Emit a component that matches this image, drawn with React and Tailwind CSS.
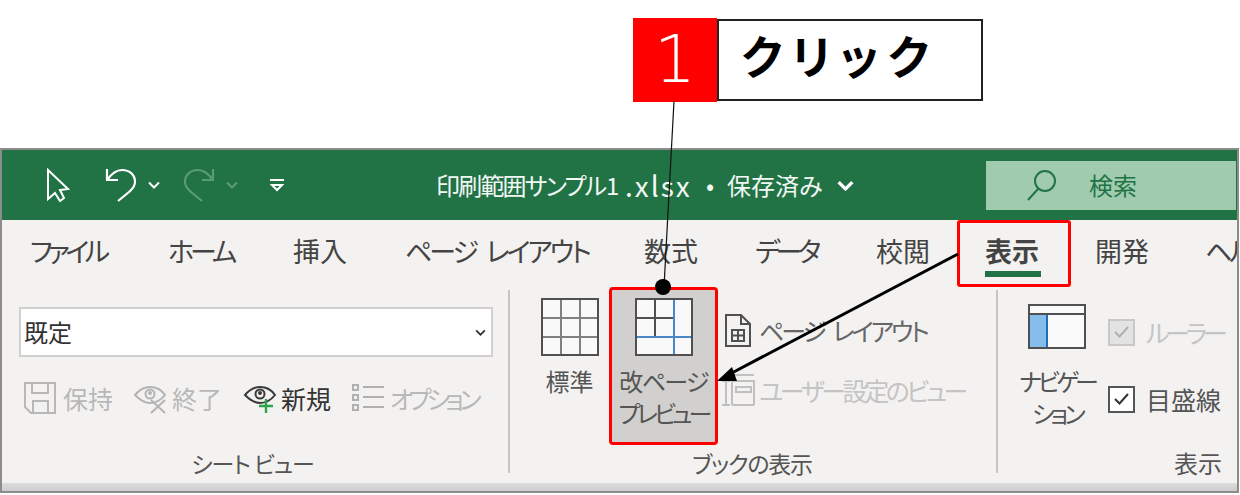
import React from 'react';

const tabs = [
  { label: 'ファイル', width: 'w-[138px]', track: 'tracking-[-4.5px]' },
  { label: 'ホーム', width: 'w-[125px]', track: 'tracking-[-4px]' },
  { label: '挿入', width: 'w-[112px]', track: '' },
  { label: 'ページ レイアウト', width: 'w-[239px]', track: 'tracking-[-3px] [word-spacing:7px]' },
  { label: '数式', width: 'w-[111px]', track: '' },
  { label: 'データ', width: 'w-[121px]', track: 'tracking-[-4.5px]' },
  { label: '校閲', width: 'w-[109px]', track: '' },
];

const Chevron = ({ className, stroke = '#fff', w = 2 }) => (
  <svg className={`shrink-0 ${className}`} viewBox="0 0 12 8" fill="none" stroke={stroke} strokeWidth={w}>
    <path d="M1 1.5 L6 6.5 L11 1.5" />
  </svg>
);

const UndoIcon = ({ stroke, flip }) => (
  <svg className={`h-[34px] w-[32px] ${flip ? '-scale-x-100' : ''}`} viewBox="0 0 32 34" fill="none" stroke={stroke} strokeWidth="2.2">
    <path d="M2 1 V12 H13" />
    <path d="M2 12 C7 5 12 2 17 2 C25 2 30 7 30 14 C30 19 27 21 24 24 L13 33" />
  </svg>
);

const GridIcon = ({ children }) => (
  <svg className="h-[58px] w-[58px] shrink-0" viewBox="0 0 58 58" fill="none">
    <rect x="1" y="1" width="56" height="56" fill="#f9f9f9" stroke="#505050" strokeWidth="2" />
    {children}
  </svg>
);

const EyeIcon = ({ stroke, children }) => (
  <svg className="h-[32px] w-[34px] shrink-0" viewBox="0 0 34 32" fill="none" stroke={stroke} strokeWidth="2">
    <path d="M2 13 C7 7 12 5 17 5 C22 5 28 7 32 13 C28 18 22 21 17 21 C12 21 7 18 2 13 Z" />
    <circle cx="17" cy="12" r="4.5" />
    <circle cx="17" cy="11" r="2" fill={stroke} stroke="none" />
    {children}
  </svg>
);

const SmallTool = ({ icon, text, color, className = '' }) => (
  <div className={`flex shrink-0 items-center ${className}`}>
    {icon}
    <span className={`whitespace-nowrap text-[25px] leading-[34px] ${color}`}>{text}</span>
  </div>
);

const Overlay = () => (
  <svg className="pointer-events-none absolute left-0 top-0 h-[495px] w-[1240px]" viewBox="0 0 1240 495" fill="none">
    <path d="M674 101 L664 287" stroke="#111" strokeWidth="1.2" />
    <circle cx="663" cy="287" r="8" fill="#000" />
    <path d="M958 254 L728 375" stroke="#000" strokeWidth="3" />
    <path d="M717 381 L732 367 L737 381 Z" fill="#000" />
  </svg>
);

export default function App() {
  return (
    <div className="relative h-[495px] w-[1240px] overflow-hidden bg-white font-['Noto_Sans_CJK_JP','Liberation_Sans',sans-serif] [font-feature-settings:'palt']">
      {/* callout */}
      <div className="flex h-[148px] items-start pl-[633px] pt-[18px]">
        <div className="flex h-[84px] w-[84px] items-center justify-center bg-[#ff0000] font-['DejaVu_Sans',sans-serif] text-[66px] font-extralight leading-none text-white">1</div>
        <div className="mt-[1px] flex h-[82px] w-[266px] items-center border-2 border-[#222] pb-[12px] pl-[22px] text-[46px] font-bold leading-none tracking-[9px] text-black">クリック</div>
      </div>

      {/* excel window */}
      <div className="h-[345px] w-[1239px] border-2 border-[#8c8c8c] bg-[#f3f2f1]">
        <div className="flex h-[70px] items-center bg-[#217346]">
          <svg className="ml-[44px] h-[34px] w-[24px] shrink-0" viewBox="0 0 24 34" fill="none" stroke="#fff" strokeWidth="2">
            <path d="M2 2 V31 L9 25 L14 33 L18 30 L14 22 L22 21 Z" />
          </svg>
          <div className="ml-[35px] shrink-0"><UndoIcon stroke="#fff" /></div>
          <Chevron className="ml-[11px] h-[8px] w-[12px]" />
          <div className="ml-[23px] shrink-0"><UndoIcon stroke="#5a9c78" flip /></div>
          <Chevron className="ml-[11px] h-[8px] w-[12px]" stroke="#5a9c78" />
          <svg className="ml-[32px] h-[14px] w-[14px] shrink-0" viewBox="0 0 14 14" fill="none" stroke="#fff" strokeWidth="2">
            <path d="M0 2 H14" />
            <path d="M2 7 L7 12 L12 7 Z" />
          </svg>
          {/* title pieces have their own widths, the latin part is set larger than the kana */}
          <div className="ml-[152px] flex w-[401px] shrink-0 items-center whitespace-nowrap text-[24px] leading-[34px] text-[#f2f7f4]">
            <span className="w-[170px] shrink-0 tracking-[-1.8px]">印刷範囲サンプル</span>
            <span className="w-[19px] shrink-0">1</span>
            <span className="w-[81px] shrink-0 text-[28px] tracking-[2px]">.xlsx</span>
            <span className="w-[21px] shrink-0">•</span>
            <span className="shrink-0">保存済み</span>
          </div>
          <Chevron className="h-[11px] w-[17px]" w={2.4} />
          <div className="ml-[132px] flex h-[49px] flex-1 items-center bg-[#a0cbae]">
            <svg className="ml-[41px] h-[32px] w-[30px]" viewBox="0 0 30 32" fill="none" stroke="#217346" strokeWidth="2">
              <circle cx="18" cy="12" r="10" />
              <path d="M11 20 L1 31" />
            </svg>
            <span className="ml-[32px] text-[24px] leading-[34px] text-[#217346]">検索</span>
          </div>
          <div className="w-px" />
        </div>

        {/* tabs */}
        <div className="flex h-[67px] items-start overflow-hidden pl-[28px] pt-[12px] text-[27px] leading-[38px] text-[#444]">
          {tabs.map((t) => (
            <div key={t.label} className={`${t.width} ${t.track} shrink-0 whitespace-nowrap`}>{t.label}</div>
          ))}
          <div className="relative w-[110px] shrink-0 font-bold">
            表示
            <div className="absolute left-0 top-[39px] h-[6px] w-[56px] bg-[#217346]" />
            <div className="absolute -left-[28px] -top-[12px] h-[67px] w-[114px] rounded-[3px] border-[3px] border-[#ff0000]" />
          </div>
          <div className="w-[110px] shrink-0">開発</div>
          <div className="whitespace-nowrap tracking-[-3px]">ヘルプ</div>
        </div>

        {/* ribbon */}
        <div className="flex h-[196px] items-start">
          <div className="flex h-[196px] w-[506px] shrink-0 flex-col pl-[17px] pt-[20px]">
            <div className="flex h-[50px] w-[474px] items-center justify-between border-2 border-[#d2d0ce] bg-white pl-[3px] pr-[5px] text-[24px] leading-[34px] text-[#333]">
              既定
              <Chevron className="h-[7px] w-[11px]" stroke="#333" />
            </div>
            <div className="mt-[24px] flex items-center">
              <SmallTool
                className="ml-[5px] w-[109px]"
                color="text-[#b8b8b8]"
                text="保持"
                icon={
                  <svg className="mr-[7px] h-[32px] w-[32px] shrink-0" viewBox="0 0 32 32" fill="none" stroke="#b8b8b8" strokeWidth="2">
                    <path d="M1 1 H31 V31 H7 L1 25 Z" />
                    <path d="M8 1 V11 H24 V1" />
                    <path d="M9 31 V19 H24 V31" />
                  </svg>
                }
              />
              <SmallTool
                className="w-[110px]"
                color="text-[#b8b8b8]"
                text="終了"
                icon={
                  <div className="mr-[5px]">
                    <EyeIcon stroke="#b4b4b4">
                      <path d="M18 18 L32 31 M32 18 L18 31" />
                    </EyeIcon>
                  </div>
                }
              />
              <SmallTool
                className="w-[109px]"
                color="text-[#333]"
                text="新規"
                icon={
                  <div className="mr-[4px]">
                    <EyeIcon stroke="#3a3a3a">
                      <path d="M23 17 V31 M16 24 H30" stroke="#2ea44f" strokeWidth="2.4" />
                    </EyeIcon>
                  </div>
                }
              />
              <SmallTool
                color="text-[#b8b8b8] tracking-[-4.6px]"
                text="オプション"
                icon={
                  <svg className="mr-[6px] h-[32px] w-[32px] shrink-0" viewBox="0 0 32 32" fill="none" stroke="#b0b0b0" strokeWidth="2">
                    <rect x="1" y="3" width="5" height="5" />
                    <rect x="1" y="13" width="5" height="5" />
                    <rect x="1" y="23" width="5" height="5" />
                    <path d="M11 5 H32 M11 15 H32 M11 25 H32" />
                  </svg>
                }
              />
            </div>
            <div className="mt-auto pb-[3px] pr-[22px] text-center text-[23px] leading-[34px] tracking-[-1.1px] text-[#555]">シート ビュー</div>
          </div>
          <div className="mt-[3px] h-[183px] w-[2px] shrink-0 bg-[#c8c6c4]" />

          <div className="flex h-[196px] w-[486px] shrink-0 flex-col">
            <div className="flex items-start">
              <div className="ml-[20px] flex w-[79px] shrink-0 flex-col items-center pt-[11px]">
                <GridIcon>
                  <path d="M20 2 V56 M39 2 V56 M2 20 H56 M2 39 H56" stroke="#808080" strokeWidth="2" />
                </GridIcon>
                <span className="mt-[9px] text-[24px] leading-[32px] text-[#555]">標準</span>
              </div>
              <div className="flex h-[158px] w-[109px] shrink-0 flex-col items-center rounded-[4px] border-[3px] border-[#ff0000] bg-[#d2d0ce] pt-[8px]">
                <GridIcon>
                  <path d="M20 2 V39 M2 20 H39" stroke="#505050" strokeWidth="2" />
                  <path d="M39 2 V56 M2 39 H56" stroke="#4a86c8" strokeWidth="2" />
                </GridIcon>
                <div className="mt-[9px] flex flex-col items-center whitespace-nowrap text-[24px] leading-[32px] text-[#555]">
                  <span className="tracking-[-1.7px]">改ページ</span>
                  <span className="tracking-[-3.8px]">プレビュー</span>
                </div>
              </div>
              <div className="ml-[4px] flex shrink-0 flex-col gap-[26px] pt-[26px]">
                <SmallTool
                  color="text-[#666] tracking-[-3px] [word-spacing:6px]"
                  text="ページ レイアウト"
                  icon={
                    <div className="flex w-[37px] shrink-0 pl-[3px]">
                      <svg className="h-[33px] w-[26px]" viewBox="0 0 26 33" fill="none" stroke="#505050" strokeWidth="2">
                        <path d="M1 1 H16 L25 10 V32 H1 Z" />
                        <path d="M16 1 V10 H25" />
                        <path d="M7 16 H19 V27 H7 Z M13 16 V27 M7 21.5 H19" />
                      </svg>
                    </div>
                  }
                />
                <SmallTool
                  color="text-[#c4c4c4] tracking-[-3.4px]"
                  text="ユーザー設定のビュー"
                  icon={
                    <div className="flex w-[37px] shrink-0">
                      <svg className="h-[33px] w-[33px]" viewBox="0 0 33 33" fill="none" stroke="#c0c0c0" strokeWidth="2">
                        <path d="M0 7 H8 M0 31 H8 M4 7 V31" />
                        <path d="M10 1 H32 M10 31 H32 M10 7 H32 V31 M10 7 V31" />
                        <rect x="14" y="13" width="15" height="5" />
                      </svg>
                    </div>
                  }
                />
              </div>
            </div>
            <div className="mt-auto pb-[3px] pr-[2px] text-center text-[23px] leading-[34px] tracking-[-1.2px] text-[#555]">ブックの表示</div>
          </div>
          <div className="mt-[3px] h-[183px] w-[2px] shrink-0 bg-[#c8c6c4]" />

          <div className="flex h-[196px] flex-1 flex-col overflow-hidden">
            <div className="flex items-start">
              <div className="ml-[16px] flex w-[86px] shrink-0 flex-col items-center pt-[17px]">
                <svg className="h-[45px] w-[58px] shrink-0" viewBox="0 0 58 45" fill="none">
                  <rect x="1" y="1" width="56" height="43" fill="#fafafa" stroke="#505050" strokeWidth="2" />
                  <rect x="2" y="10" width="17" height="33" fill="#84bdec" />
                  <path d="M19 10 V43" stroke="#1e6fba" strokeWidth="2" />
                  <path d="M1 10 H57" stroke="#505050" strokeWidth="2" />
                </svg>
                <div className="mt-[16px] flex flex-col items-center whitespace-nowrap text-[24px] leading-[32px] text-[#555]">
                  <span className="tracking-[-4px]">ナビゲー</span>
                  <span className="tracking-[-3.8px]">ション</span>
                </div>
              </div>
              <div className="ml-[8px] flex shrink-0 flex-col gap-[27px] pt-[25px]">
                <div className="flex h-[40px] items-center gap-[11px]">
                  <div className="flex h-[27px] w-[27px] items-center justify-center border-2 border-[#c8c8c8] bg-[#e3e3e3]">
                    <svg className="h-[12px] w-[15px]" viewBox="0 0 15 12" fill="none" stroke="#b0b0b0" strokeWidth="2">
                      <path d="M1 6 L5.5 10.5 L14 1" />
                    </svg>
                  </div>
                  <span className="whitespace-nowrap text-[25px] leading-[34px] tracking-[-4.2px] text-[#c4c4c4]">ルーラー</span>
                </div>
                <div className="flex h-[40px] items-center gap-[11px]">
                  <div className="flex h-[27px] w-[27px] items-center justify-center border-2 border-[#555] bg-white">
                    <svg className="h-[12px] w-[15px]" viewBox="0 0 15 12" fill="none" stroke="#333" strokeWidth="2">
                      <path d="M1 6 L5.5 10.5 L14 1" />
                    </svg>
                  </div>
                  <span className="whitespace-nowrap text-[25px] leading-[34px] text-[#555]">目盛線</span>
                </div>
              </div>
            </div>
            <div className="mt-auto pb-[3px] pr-[15px] text-right text-[24px] leading-[34px] text-[#555]">表示</div>
          </div>
        </div>

        <div className="h-[8px] bg-gradient-to-b from-[#dcdcdc] to-[#cdcdcd]" />
      </div>

      <Overlay />
    </div>
  );
}
